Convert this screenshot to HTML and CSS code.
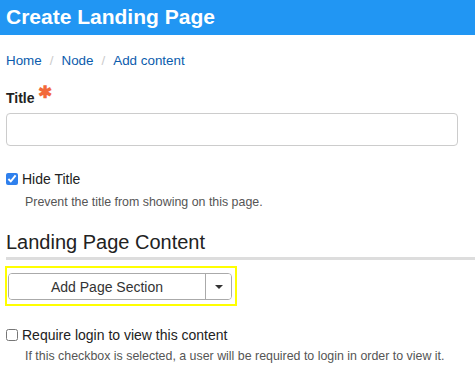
FILE: index.html
```html
<!DOCTYPE html>
<html lang="en">
<head>
    <meta charset="UTF-8">
    <title>Create Landing Page</title>
    <link rel="stylesheet" href="styles.css">
</head>
<body>
    <h1 class="page-title">Create Landing Page</h1>

    <div class="content">
        <nav class="breadcrumb">
            <a href="#">Home</a><span class="sep">/</span><a href="#">Node</a><span class="sep">/</span><a href="#">Add content</a>
        </nav>

        <div class="form-item">
            <label class="form-label">Title <span class="required">✱</span></label>
            <input class="form-text" type="text">
        </div>

        <div class="form-check hide-check">
            <label class="check-label"><input type="checkbox" checked> Hide Title</label>
            <div class="description">Prevent the title from showing on this page.</div>
        </div>

        <h2 class="section-title">Landing Page Content</h2>

        <div class="highlight">
            <div class="split-button">
                <button class="split-main" type="button">Add Page Section</button>
                <button class="split-toggle" type="button"><span class="caret"></span></button>
            </div>
        </div>

        <div class="form-check login-check">
            <label class="check-label"><input type="checkbox"> Require login to view this content</label>
            <div class="description">If this checkbox is selected, a user will be required to login in order to view it.</div>
        </div>
    </div>
</body>
</html>
```

FILE: styles.css
```css
body {
    margin: 0;
    font-family: "Liberation Sans", Arial, sans-serif;
    color: #222;
    background: #fff;
}

.page-title {
    margin: 0;
    height: 35px;
    line-height: 34px;
    padding: 0 6px;
    background-color: #2196f3;
    color: #fff;
    font-size: 21px;
    font-weight: bold;
}

.content {
    padding: 0 0 0 6px;
}

.breadcrumb {
    margin-top: 18px;
    font-size: 13.4px;
    line-height: 16px;
}

.breadcrumb a {
    color: #0b5cad;
    text-decoration: none;
}

.breadcrumb .sep {
    color: #ccc;
    margin: 0 8px;
}

.form-item {
    margin-top: 15px;
}

.form-label {
    display: block;
    font-size: 14px;
    font-weight: bold;
    line-height: 18px;
}

.required {
    color: #f2693b;
    font-size: 17px;
    vertical-align: 5px;
}

.form-text {
    display: block;
    box-sizing: border-box;
    width: 452px;
    height: 33px;
    margin-top: 6px;
    border: 1px solid #ccc;
    border-radius: 4px;
    background: #fff;
}

.check-label {
    display: flex;
    align-items: center;
    height: 18px;
    font-size: 14px;
    line-height: 18px;
}

.check-label input {
    margin: 0 4px 0 0;
    width: 12px;
    height: 12px;
    accent-color: #2f80ed;
}

.description {
    margin: 7px 0 0 19px;
    font-size: 12.4px;
    line-height: 14px;
    color: #555;
}

.hide-check {
    margin-top: 24px;
}

.section-title {
    margin: 21px 0 0;
    padding-bottom: 3px;
    border-bottom: 3px solid #ddd;
    font-size: 20px;
    font-weight: normal;
    line-height: 24px;
}

.highlight {
    width: 224px;
    margin: 6px 0 0 -1px;
    padding: 5px 3px 4px 1px;
    border: 2px solid #ffff00;
}

.split-button {
    display: flex;
    height: 25px;
    border: 1px solid #aaa;
    border-radius: 4px;
    overflow: hidden;
    background: #fff;
}

.split-button button {
    border: 0;
    background: #fff;
    font-family: inherit;
    color: #333;
    padding: 0;
}

.split-main {
    flex: 1;
    font-size: 14px;
}

.split-toggle {
    width: 26px;
    border-left: 1px solid #aaa !important;
    display: flex;
    align-items: center;
    justify-content: center;
}

.caret {
    width: 0;
    height: 0;
    border-left: 4px solid transparent;
    border-right: 4px solid transparent;
    border-top: 4px solid #333;
}

.login-check {
    margin-top: 20px;
}

.login-check .description {
    margin-top: 5px;
}
```
